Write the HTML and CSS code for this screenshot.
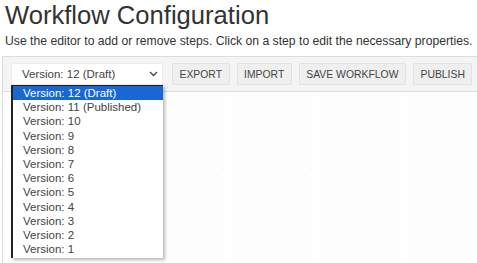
FILE: index.html
```html
<!DOCTYPE html>
<html lang="en">
<head>
  <meta charset="UTF-8" />
  <title>Workflow Configuration</title>
  <link rel="stylesheet" href="styles.css">
</head>
<body>
  <h1 class="page-title">Workflow Configuration</h1>
  <p class="page-intro">Use the editor to add or remove steps. Click on a step to edit the necessary properties.</p>

  <div class="editor">
    <div class="toolbar">
      <div class="version-select">
        <span>Version: 12 (Draft)</span>
        <svg class="chevron" width="9" height="6" viewBox="0 0 9 6">
          <path d="M1 1 L4.5 4.5 L8 1" fill="none" stroke="#444" stroke-width="1.3"/>
        </svg>
      </div>
      <button class="tool-btn">Export</button>
      <button class="tool-btn">Import</button>
      <button class="tool-btn">Save Workflow</button>
      <button class="tool-btn">Publish</button>
    </div>

    <div class="canvas"></div>

    <!-- open version dropdown -->
    <ul class="version-menu">
      <li class="selected">Version: 12 (Draft)</li>
      <li>Version: 11 (Published)</li>
      <li>Version: 10</li>
      <li>Version: 9</li>
      <li>Version: 8</li>
      <li>Version: 7</li>
      <li>Version: 6</li>
      <li>Version: 5</li>
      <li>Version: 4</li>
      <li>Version: 3</li>
      <li>Version: 2</li>
      <li>Version: 1</li>
    </ul>
  </div>
</body>
</html>
```

FILE: styles.css
```css
:root {
  --text: #333;
  --border: #dcdcdf;
  --toolbar-bg: #f4f4f6;
  --btn-bg: #efeff0;
  --select-blue: #1967d2;
}

* { margin: 0; padding: 0; box-sizing: border-box; }

body {
  font-family: 'Liberation Sans', Arial, sans-serif;
  color: var(--text);
  background: #fff;
  padding: 0 0 0 4px;
  overflow: hidden;
}

.page-title {
  font-size: 25.6px;
  font-weight: 400;
  line-height: 30px;
  padding-left: 1px;
}

.page-intro {
  font-size: 12.2px;
  line-height: 16px;
  margin-top: 3px;
  padding-left: 1px;
  white-space: nowrap;
}

.editor {
  position: relative;
  margin: 7px -20px 0 -2px;
  border-left: 1px solid var(--border);
  height: 230px;
}

.toolbar {
  display: flex;
  align-items: center;
  gap: 7px;
  height: 36px;
  padding: 0 8px;
  background: var(--toolbar-bg);
  border-top: 1px solid var(--border);
  border-bottom: 1px solid var(--border);
}

.toolbar > * { flex-shrink: 0; }

.version-select {
  display: flex;
  align-items: center;
  justify-content: space-between;
  width: 152px;
  height: 22px;
  padding: 0 4px 0 10px;
  margin-right: 2px;
  background: #fff;
  border: 1px solid #ececec;
  font-size: 11.5px;
  color: #444;
}

.tool-btn {
  height: 22px;
  padding: 0 6.5px;
  font-family: inherit;
  font-size: 10.4px;
  text-transform: uppercase;
  white-space: nowrap;
  color: #444;
  background: var(--btn-bg);
  border: 1px solid #e2e2e4;
  border-radius: 1px;
}

.canvas {
  height: 194px;
  background-color: #fefefe;
  background-image: radial-gradient(circle, #ececec 0.6px, transparent 0.9px);
  background-size: 8.8px 8.8px;
  background-position: 5px 2px;
}

.version-menu {
  position: absolute;
  top: 29px;
  left: 8px;
  width: 152px;
  list-style: none;
  background: #fff;
  border-top: 1px solid #222;
  border-left: 2px solid #222;
  box-shadow: 2px 2px 3px rgba(0, 0, 0, 0.28);
  padding-bottom: 2px;
  font-size: 11.5px;
  color: #444;
}

.version-menu li {
  height: 14.2px;
  line-height: 14.2px;
  padding-left: 10px;
  white-space: nowrap;
}

.version-menu li.selected {
  background: var(--select-blue);
  color: #fff;
}
```
